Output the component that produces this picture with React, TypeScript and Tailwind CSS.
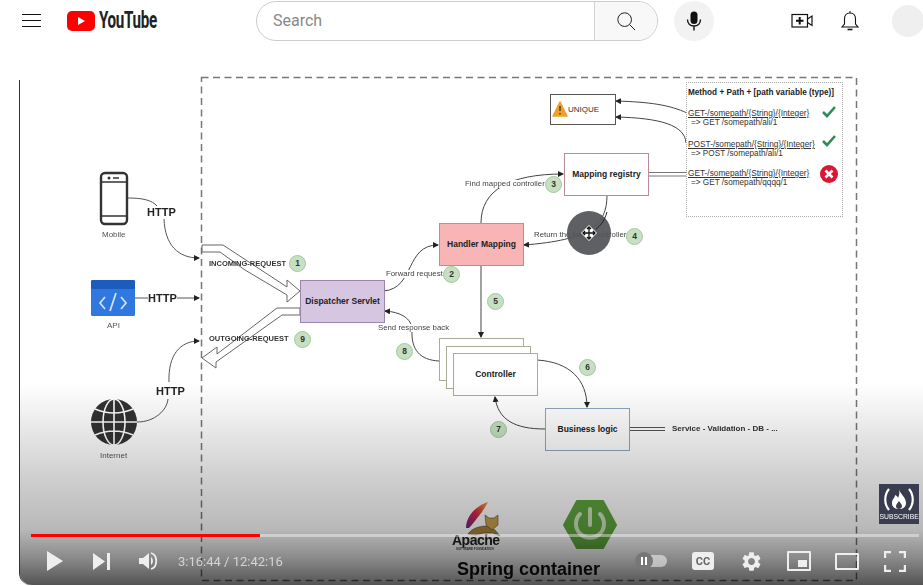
import { MdSettings } from "react-icons/md";

const Badge = ({ n, className }: { n: number; className: string }) => (
  <div
    className={`absolute w-[17px] h-[17px] rounded-full bg-[#c6e0c1] border border-[#a3c79d] flex items-center justify-center text-[8.5px] font-bold text-[#333] ${className}`}
  >
    {n}
  </div>
);

const Label = ({ text, className }: { text: string; className: string }) => (
  <span className={`absolute whitespace-nowrap leading-none ${className}`}>{text}</span>
);

const Box = ({ text, className }: { text?: string; className: string }) => (
  <div
    className={`absolute w-[85px] h-[43px] border flex items-center justify-center text-[8.5px] font-bold leading-none text-[#222] ${className}`}
  >
    {text}
  </div>
);

const PathLine = ({ text }: { text: string }) => (
  <div className="text-[8.3px] leading-[8px] underline text-[#333]">{text}</div>
);

const ResultLine = ({ text }: { text: string }) => (
  <div className="text-[8.2px] leading-[8px] text-[#333] pl-[3px] mt-[2px]">{text}</div>
);

const Connectors = () => (
  <svg
    className="absolute left-0 top-0 overflow-visible"
    width={903}
    height={505}
    viewBox="20 80 903 505"
    fill="none"
  >
    <defs>
      <marker id="arrow" markerWidth="6" markerHeight="6" refX="5" refY="3" orient="auto">
        <path d="M0 0L6 3L0 6z" fill="#222" />
      </marker>
      <linearGradient id="feather" x1="0" y1="1" x2="1" y2="0">
        <stop offset="0" stopColor="#6b2a8c" />
        <stop offset="0.5" stopColor="#d8274a" />
        <stop offset="1" stopColor="#f6a13a" />
      </linearGradient>
    </defs>

    {/* container frame */}
    <rect x="201.5" y="77.5" width="655" height="503" stroke="#777" strokeWidth="1.5" strokeDasharray="7 4.5" />

    {/* client side */}
    <g stroke="#555" strokeWidth="1">
      <path d="M128 198C142 198 152 200 157 206" />
      <path d="M164 219C165 245 178 258 199 258" markerEnd="url(#arrow)" />
      <path d="M135 298H148" />
      <path d="M176 298H199" markerEnd="url(#arrow)" />
      <path d="M137 422C155 422 167 410 168 399" />
      <path d="M169 382C168 355 180 341 199 341" markerEnd="url(#arrow)" />
    </g>

    {/* phone */}
    <rect x="101" y="173" width="26" height="51" rx="4" fill="#fff" stroke="#333" strokeWidth="2.4" />
    <path d="M101 182H127M101 216H127" stroke="#333" strokeWidth="1.5" />
    <circle cx="109" cy="178" r="1.5" fill="#333" />
    <path d="M113 178H119" stroke="#333" strokeWidth="1.5" />

    {/* api */}
    <rect x="91" y="280" width="44" height="36" rx="1.5" fill="#2f78e0" />
    <rect x="91" y="280" width="44" height="9" rx="1.5" fill="#1d5cbc" />
    <path d="M105 297L100 303L105 309M121 297L126 303L121 309M116 293L110 311" stroke="#cfe0f7" strokeWidth="1.8" />

    {/* globe */}
    <circle cx="114" cy="422" r="23" fill="#333" />
    <g stroke="#fff" strokeWidth="1.6">
      <ellipse cx="114" cy="422" rx="11" ry="23" />
      <path d="M114 399V445M91 422H137M95 409Q114 417 133 409M95 435Q114 427 133 435" />
    </g>

    {/* request arrows */}
    <path
      d="M202 245H223L287 287V280L300 291L287 302V295L245 270L220 252H202Z"
      fill="#fff"
      stroke="#666"
      strokeWidth="1"
    />
    <path
      d="M300 308H277L217 354V347L202 358L216 368V362L282 315H300Z"
      fill="#fff"
      stroke="#666"
      strokeWidth="1"
    />

    {/* flow */}
    <g stroke="#444" strokeWidth="1">
      <path d="M384 291C415 288 405 245 438 245" markerEnd="url(#arrow)" />
      <path d="M439 361C420 360 411 350 412 330C412 318 400 312 385 311" markerEnd="url(#arrow)" />
      <path d="M481 223C481 190 510 174 563 174" markerEnd="url(#arrow)" />
      <path d="M481 265V337" markerEnd="url(#arrow)" />
      <path d="M537 360C570 362 587 380 587 407" markerEnd="url(#arrow)" />
      <path d="M545 429C515 429 498 420 495 397" markerEnd="url(#arrow)" />
      <path d="M607 195C607 225 590 240 524 245" markerEnd="url(#arrow)" />
      <path d="M687 113C670 105 650 102 616 101" markerEnd="url(#arrow)" />
      <path d="M686 143C685 125 660 118 616 117" markerEnd="url(#arrow)" />
      <path d="M648 172.5H687M648 176H687" stroke="#777" />
      <path d="M629 427.5H665M629 430.5H665" stroke="#555" />
    </g>

    {/* tomcat */}
    <path d="M466 528C466 516 476 506 488 502C484 510 476 520 469 528Z" fill="url(#feather)" />
    <path d="M468 534C472 528 480 526 487 526L495 530L500 536L493 533L484 533L476 535Z" fill="#a9803a" stroke="#333" strokeWidth="0.5" />
    <path d="M485 515L489 518H494L498 515V525L492 530L486 525Z" fill="#c9a24a" stroke="#333" strokeWidth="0.5" />

    {/* spring */}
    <path d="M577 501H603L616 525L603 548H577L564 525Z" fill="#5fa63e" stroke="#5fa63e" strokeWidth="2" strokeLinejoin="round" />
    <path d="M580 514A14 14 0 1 0 600 514" stroke="#cfe3bf" strokeWidth="4" strokeLinecap="round" />
    <path d="M590 509V525" stroke="#cfe3bf" strokeWidth="4" strokeLinecap="round" />
  </svg>
);

const Overlays = () => (
  <svg
    className="absolute left-0 top-0 overflow-visible"
    width={903}
    height={505}
    viewBox="20 80 903 505"
    fill="none"
  >
    {/* warning */}
    <path d="M560 102L567 116H553Z" fill="#f0a12b" stroke="#f0a12b" strokeWidth="1.5" strokeLinejoin="round" />
    <path d="M560 106V111M560 113V114.5" stroke="#333" strokeWidth="1.3" />

    {/* checks and cross */}
    <path d="M823 112L827 116L835 107" stroke="#2f8a57" strokeWidth="2.6" />
    <path d="M823 141L827 145L835 136" stroke="#2f8a57" strokeWidth="2.6" />
    <circle cx="829" cy="174" r="9" fill="#dc1535" />
    <path d="M825.5 170.5L832.5 177.5M832.5 170.5L825.5 177.5" stroke="#fff" strokeWidth="2.6" />

    {/* pointer highlight */}
    <circle cx="589" cy="233" r="22" fill="#55565a" fillOpacity="0.94" />
    <path d="M607 212C604 222 600 226 596 229" stroke="#222" strokeWidth="1" />
    <path d="M589 225L597 233L589 241L581 233Z" fill="#fff" />
    <path d="M589 227V239M583 233H595M587 229L589 227L591 229M587 237L589 239L591 237M585 231L583 233L585 235M593 231L595 233L593 235" stroke="#111" strokeWidth="1.3" />
  </svg>
);

export default function App() {
  return (
    <div className="w-[923px] h-[586px] overflow-hidden bg-white font-['Liberation_Sans',sans-serif]">
      <header className="h-[41px] flex items-center font-['Roboto',sans-serif]">
        <button className="ml-[22px] w-[19px] shrink-0 flex flex-col gap-[5px]">
          <span className="h-px bg-[#111]" />
          <span className="h-px bg-[#111]" />
          <span className="h-px bg-[#111]" />
        </button>

        <div className="ml-[26px] w-[90px] shrink-0 flex items-center">
          <svg width="28" height="20" viewBox="0 0 28 20" className="shrink-0">
            <rect width="28" height="20" rx="5" fill="#f00" />
            <path d="M11 6L18 10L11 14Z" fill="#fff" />
          </svg>
          <span className="ml-[4px] text-[23px] font-bold leading-none text-[#222] tracking-[-0.5px] origin-left scale-x-[0.66]">
            YouTube
          </span>
        </div>

        <div className="ml-[99px] w-[402px] h-[40px] shrink-0 flex rounded-full border border-[#ccc] overflow-hidden">
          <input
            placeholder="Search"
            className="flex-1 min-w-0 pl-4 text-base outline-none placeholder:text-[#888]"
          />
          <button className="w-[63px] bg-[#f8f8f8] border-l border-[#d3d3d3] flex items-center justify-center">
            <svg width="20" height="20" viewBox="0 0 22 22" fill="none" stroke="#222" strokeWidth="1.1">
              <circle cx="9.5" cy="9.5" r="7.5" />
              <path d="M15 15L21 21" />
            </svg>
          </button>
        </div>

        <button className="ml-[16px] w-10 h-10 shrink-0 rounded-full bg-[#f2f2f2] flex items-center justify-center">
          <svg width="16" height="20" viewBox="0 0 16 20" fill="none">
            <rect x="4.5" y="0.5" width="7" height="12.5" rx="3.5" fill="#111" />
            <path d="M1.5 8.5C1.5 12.5 4 15 8 15C12 15 14.5 12.5 14.5 8.5M8 15V19.5" stroke="#111" strokeWidth="1.4" />
          </svg>
        </button>

        <button className="ml-[77px] w-[22px] shrink-0 flex items-center justify-center">
          <svg width="22" height="16" viewBox="0 0 22 16" fill="none" stroke="#111">
            <rect x="1" y="1.5" width="15.5" height="12.5" strokeWidth="1.2" />
            <path d="M8.7 4V11.5M5 7.75H12.5" strokeWidth="2" />
            <path d="M16.5 6L21 3V12.5L16.5 9.5" strokeWidth="1.2" />
          </svg>
        </button>

        <button className="ml-[28px] w-[18px] shrink-0 flex items-center justify-center">
          <svg width="18" height="22" viewBox="0 0 18 22" fill="none" stroke="#111" strokeWidth="1.1">
            <path d="M9 3C5 3 3.5 6 3.5 9V14L1 17H17L14.5 14V9C14.5 6 13 3 9 3ZM9 1V3" />
            <path d="M6.5 19.5H11.5" strokeWidth="1.6" />
          </svg>
        </button>

        <div className="ml-[33px] w-8 h-8 shrink-0 rounded-full bg-[#efefef]" />
      </header>

      <div className="relative ml-[19px] mt-[39px] w-[904px] h-[505px] border-l border-[#333] rounded-bl-[12px] bg-white">
        <div className="absolute inset-0 blur-[0.5px]">
          <Connectors />

          <Label text="Mobile" className="left-[82px] top-[151px] text-[8px] text-[#555]" />
          <Label text="API" className="left-[87px] top-[242px] text-[8px] text-[#555]" />
          <Label text="Internet" className="left-[80px] top-[372px] text-[8px] text-[#555]" />
          <Label text="HTTP" className="left-[127px] top-[127px] text-[11px] font-bold text-[#222] bg-white" />
          <Label text="HTTP" className="left-[128px] top-[213px] text-[11px] font-bold text-[#222] bg-white" />
          <Label text="HTTP" className="left-[136px] top-[306px] text-[11px] font-bold text-[#222] bg-white" />

          <Label text="INCOMING-REQUEST" className="left-[189px] top-[180px] text-[7.5px] font-bold text-[#333]" />
          <Label text="OUTGOING-REQUEST" className="left-[189px] top-[255px] text-[7.5px] font-bold text-[#333]" />
          <Label text="Forward request" className="left-[366px] top-[190px] text-[7.8px] text-[#444] bg-white" />
          <Label text="Send response back" className="left-[358px] top-[244px] text-[7.8px] text-[#444] bg-white" />
          <Label text="Find mapped controller" className="left-[445px] top-[100px] text-[7.8px] text-[#444] bg-white" />
          <Label text="Return the found controller" className="left-[514px] top-[151px] text-[7.8px] text-[#444]" />

          <Box text="Dispatcher Servlet" className="left-[280px] top-[200px] bg-[#d6c6e2] border-[#9c86ad]" />
          <Box text="Handler Mapping" className="left-[419px] top-[143px] bg-[#f9b5b5] border-[#c88a8a]" />
          <Box text="Mapping registry" className="left-[544px] top-[73px] bg-white border-[#b98c9a]" />
          <Box className="left-[419px] top-[258px] bg-white border-[#a9ad97]" />
          <Box className="left-[426px] top-[266px] bg-white border-[#a9ad97]" />
          <Box text="Controller" className="left-[433px] top-[273px] bg-white border-[#a9ad97]" />
          <Box text="Business logic" className="left-[525px] top-[328px] bg-white border-[#8fa5bf]" />

          <div className="absolute left-[530px] top-[14px] w-[66px] h-[31px] bg-white border border-[#555] flex items-center pl-[17px] text-[8px] leading-none text-[#333]">
            UNIQUE
          </div>

          <div className="absolute left-[666px] top-[2px] w-[157px] h-[135px] border border-dotted border-[#aaa] bg-white pl-px pt-[6px] flex flex-col">
            <div className="text-[8.2px] leading-[8px] font-bold text-[#222]">
              Method + Path + [path variable (type)]
            </div>
            <div className="mt-[12px]">
              <PathLine text="GET-/somepath/{String}/{Integer}" />
              <ResultLine text="=> GET /somepath/ali/1" />
            </div>
            <div className="mt-[13px]">
              <PathLine text="POST-/somepath/{String}/{Integer}" />
              <ResultLine text="=> POST /somepath/ali/1" />
            </div>
            <div className="mt-[11px]">
              <PathLine text="GET-/somepath/{String}/{Integer}" />
              <ResultLine text="=> GET /somepath/qqqq/1" />
            </div>
          </div>

          <Overlays />

          <Badge n={1} className="left-[269px] top-[175px]" />
          <Badge n={2} className="left-[423px] top-[186px]" />
          <Badge n={3} className="left-[525px] top-[96px]" />
          <Badge n={4} className="left-[606px] top-[148px]" />
          <Badge n={5} className="left-[467px] top-[213px]" />
          <Badge n={6} className="left-[559px] top-[279px]" />
          <Badge n={7} className="left-[470px] top-[341px]" />
          <Badge n={8} className="left-[376px] top-[263px]" />
          <Badge n={9} className="left-[274px] top-[251px]" />

          <Label text="Service - Validation - DB - ..." className="left-[652px] top-[345px] text-[8px] font-bold text-[#333]" />
          <Label text="Apache" className="left-[432px] top-[453px] text-[14px] font-bold tracking-[-0.5px] text-[#222]" />
          <Label text="SOFTWARE FOUNDATION" className="left-[436px] top-[468px] text-[3px] font-bold text-[#444]" />
          <Label text="Spring container" className="left-[437px] top-[480px] text-[18px] font-bold text-[#111]" />
        </div>

        {/* player chrome */}
        <div className="absolute inset-0 rounded-bl-[12px] bg-[linear-gradient(to_bottom,rgba(0,0,0,0)_60%,rgba(0,0,0,0.2)_80%,rgba(0,0,0,0.28)_89%,rgba(0,0,0,0.47)_95%,rgba(0,0,0,0.67)_100%)]" />

        <div className="absolute left-[859px] top-[404px] w-10 h-10 bg-[#3a3c50] flex flex-col items-center">
          <svg width="34" height="27" viewBox="0 0 34 27" fill="none" className="mt-[2px]">
            <path d="M7 3C2 9 2 18 7 24M27 3C32 9 32 18 27 24" stroke="#fff" strokeWidth="2.2" />
            <path d="M17 3C18 8 24 11 24 17C24 21 21 23 17 23C13 23 10 21 10 17C10 13 13 12 13 9C15 10 16 11 16 12C17 10 18 7 17 3Z" fill="#fff" />
            <path d="M17 15C18 17 20 18 20 20C20 22 18 23 17 23C15 23 14 22 14 20C14 18 16 17 17 15Z" fill="#3a3c50" />
          </svg>
          <span className="text-[8px] leading-none text-white origin-center scale-x-[0.85]">SUBSCRIBE</span>
        </div>

        <div className="absolute left-[11px] right-[4px] bottom-0 flex flex-col font-['Roboto',sans-serif]">
          <div className="h-[3px] bg-white/40 flex">
            <div className="w-[229px] bg-[#f00]" />
          </div>
          <div className="h-[48px] flex items-center">
            <button className="w-[47px] flex justify-center">
              <svg width="16" height="20" viewBox="0 0 16 20">
                <path d="M0 0L16 10L0 20Z" fill="#eee" />
              </svg>
            </button>
            <button className="w-[47px] flex justify-center">
              <svg width="17" height="17" viewBox="0 0 17 17">
                <path d="M0 0L12 8.5L0 17Z M14 0H17V17H14Z" fill="#eee" />
              </svg>
            </button>
            <button className="w-[47px] flex justify-center">
              <svg width="20" height="20" viewBox="0 0 20 20" fill="none">
                <path d="M0 7H4L10 2V18L4 13H0Z" fill="#eee" />
                <path d="M12 6C14.5 7.5 14.5 12.5 12 14V6Z" fill="#eee" />
                <path d="M12 2C19 4 19 16 12 18" stroke="#eee" strokeWidth="1.8" />
              </svg>
            </button>
            <span className="ml-[6px] text-[13px] leading-none text-[#d4d4d4]">3:16:44 / 12:42:16</span>

            <div className="ml-auto flex items-center">
              <div className="w-[53px] flex justify-center">
                <div className="relative w-[28px] h-[12px] rounded-full bg-white/50">
                  <div className="absolute left-[-4px] top-[-3px] w-[18px] h-[18px] rounded-full bg-[#777] flex items-center justify-center gap-[2px]">
                    <span className="w-[2px] h-[8px] bg-white" />
                    <span className="w-[2px] h-[8px] bg-white" />
                  </div>
                </div>
              </div>
              <div className="w-[48px] flex justify-center">
                <div className="w-[22px] h-[18px] rounded-[3px] bg-[#eee] flex items-center justify-center text-[11px] font-bold leading-none text-[#666]">
                  CC
                </div>
              </div>
              <div className="w-[48px] flex justify-center text-[#eee]">
                <MdSettings size={23} />
              </div>
              <div className="w-[48px] flex justify-center">
                <div className="relative w-[24px] h-[20px] border-2 border-[#eee] rounded-[1px]">
                  <span className="absolute right-[2px] bottom-[2px] w-[9px] h-[7px] bg-[#eee]" />
                </div>
              </div>
              <div className="w-[48px] flex justify-center">
                <div className="w-[24px] h-[17px] border-2 border-[#eee] rounded-[1px]" />
              </div>
              <div className="w-[48px] flex justify-center">
                <svg width="22" height="21" viewBox="0 0 22 21" fill="none" stroke="#eee" strokeWidth="2.4">
                  <path d="M1 7V1H7M15 1H21V7M21 14V20H15M7 20H1V14" />
                </svg>
              </div>
            </div>
          </div>
        </div>
      </div>
    </div>
  );
}
